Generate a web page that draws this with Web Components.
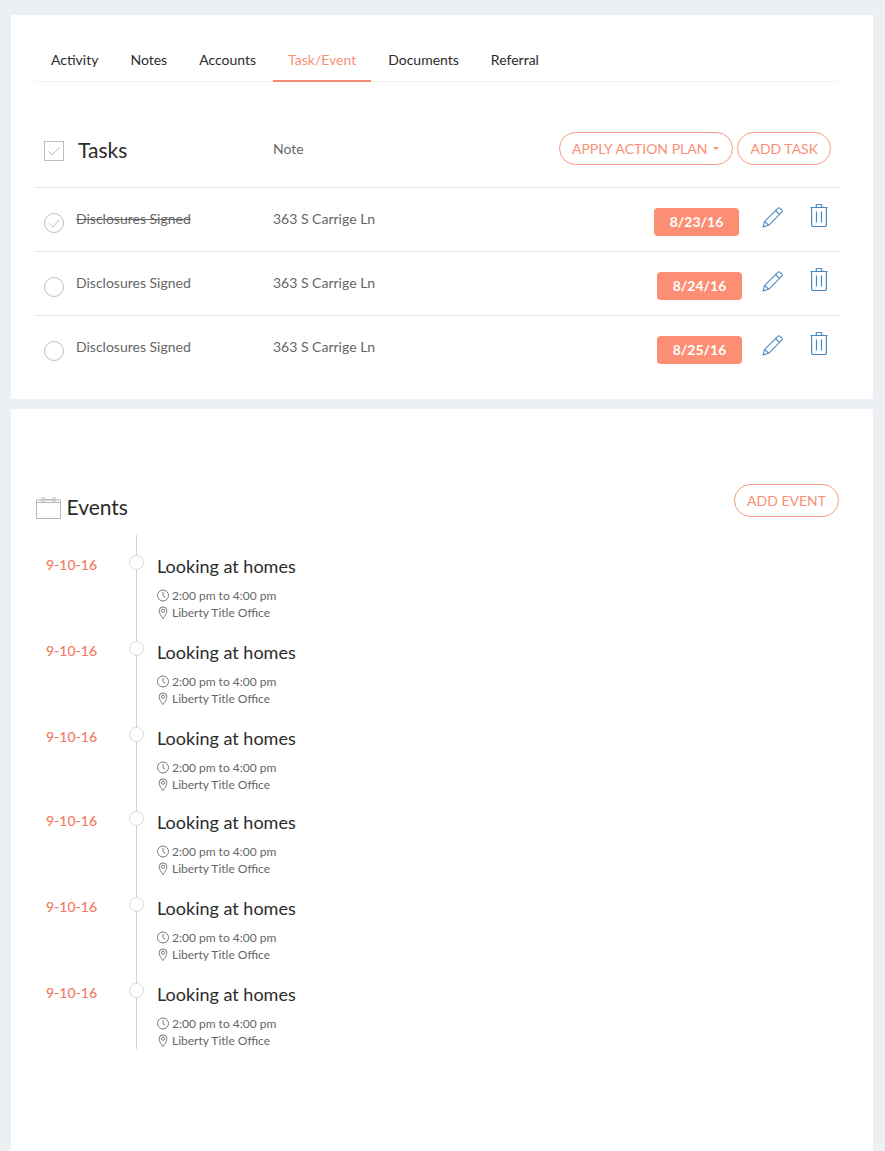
<!DOCTYPE html>
<html>
<head>
<meta charset="utf-8">
<title>Task/Event</title>
<style>
  html, body { margin: 0; height: 100%; }
  body {
    background: #ecf0f5;
    font-family: Lato, "Liberation Sans", sans-serif;
    color: #2b2b2b;
    overflow: hidden;
  }
</style>
</head>
<body>
<crm-page>
  <crm-card slot="tasks" style="--card-height: 384px">
    <tab-bar active="Task/Event" tabs="Activity,Notes,Accounts,Task/Event,Documents,Referral"></tab-bar>
    <tasks-header></tasks-header>
    <task-row name="Disclosures Signed" note="363 S Carrige Ln" date="8/23/16" done style="--badge-gap: 23px"></task-row>
    <task-row name="Disclosures Signed" note="363 S Carrige Ln" date="8/24/16"></task-row>
    <task-row name="Disclosures Signed" note="363 S Carrige Ln" date="8/25/16" last></task-row>
  </crm-card>
  <crm-card style="--card-height: 760px">
    <events-header></events-header>
    <event-list>
      <event-item></event-item>
      <event-item></event-item>
      <event-item style="--item-height: 84px"></event-item>
      <event-item></event-item>
      <event-item></event-item>
      <event-item></event-item>
    </event-list>
  </crm-card>
</crm-page>

<script>
class CrmPage extends HTMLElement {
    connectedCallback() {
        this.attachShadow({mode: 'open'});
        this.shadowRoot.innerHTML = `
<style>
:host { display: flex; flex-direction: column; gap: 10px; padding: 15px 12px 0 11px; }
</style>
<slot name="tasks"></slot><slot></slot>`;
    }
}

class CrmCard extends HTMLElement {
    connectedCallback() {
        this.attachShadow({mode: 'open'});
        this.shadowRoot.innerHTML = `
<style>
:host { display: block; background: #fff; height: var(--card-height); box-sizing: border-box; padding: 0 34px 0 24px; }
</style>
<slot></slot>`;
    }
}

class TabBar extends HTMLElement {
    connectedCallback() {
        this.attachShadow({mode: 'open'});
        const active = this.getAttribute('active');
        const tabs = this.getAttribute('tabs').split(',').map(t =>
            `<a class="${t === active ? 'on' : ''}">${t}</a>`).join('');
        this.shadowRoot.innerHTML = `
<style>
:host { display: flex; height: 67px; box-sizing: border-box; margin-right: 1px; border-bottom: 1px solid #f2f2f2; align-items: stretch; }
a { display: block; padding: 36px 16px 0; font-size: 14px; line-height: 18px; color: #2b2b2b; box-sizing: border-box; height: 67px; }
a.on { color: #fb8f75; border-bottom: 2px solid #f58d72; margin: 0 1px; padding: 36px 15px 0; }
</style>
${tabs}`;
    }
}

class PillButton extends HTMLElement {
    connectedCallback() {
        this.attachShadow({mode: 'open'});
        this.shadowRoot.innerHTML = `
<style>
:host { display: inline-flex; align-items: center; height: 33px; box-sizing: border-box; padding: 0 12px; border: 1px solid #f79a83; border-radius: 17px; color: #fb8f75; font-size: 14px; white-space: nowrap; }
.caret { width: 0; height: 0; margin: 0 1px 0 6px; border: 3.5px solid transparent; border-top: 3.5px solid #fb8f75; border-bottom: 0; }
</style>
<slot></slot>${this.hasAttribute('caret') ? '<span class="caret"></span>' : ''}`;
    }
}

class TasksHeader extends HTMLElement {
    connectedCallback() {
        this.attachShadow({mode: 'open'});
        this.shadowRoot.innerHTML = `
<style>
:host { display: flex; align-items: center; height: 106px; box-sizing: border-box; padding: 36px 8px 0 9px; border-bottom: 1px solid #e6e6e6; }
svg { width: 20px; height: 20px; flex: none; margin-top: -4px; }
h2 { margin: -6px 0 0 14px; width: 195px; font-size: 21px; font-weight: 400; line-height: 28px; color: #2b2b2b; }
.note { font-size: 14px; color: #666; flex: 1; margin-top: -9px; }
.btns { display: flex; gap: 4px; margin-top: -9px; }
</style>
<svg viewBox="0 0 20 20" fill="none" stroke="#bdbdbd"><rect x=".5" y=".5" width="19" height="19"/><path d="M4.5 10.5l3.6 3.4 7.4-7.4"/></svg>
<h2>Tasks</h2>
<div class="note">Note</div>
<div class="btns"><pill-button caret>APPLY ACTION PLAN</pill-button><pill-button>ADD TASK</pill-button></div>`;
    }
}

class TaskRow extends HTMLElement {
    connectedCallback() {
        this.attachShadow({mode: 'open'});
        const done = this.hasAttribute('done');
        const tick = done ? '<path d="M5.5 10.5l3.4 3.6 6.6-7.6"/>' : '';
        this.shadowRoot.innerHTML = `
<style>
:host { display: flex; align-items: center; height: 64px; box-sizing: border-box; padding: 0 11px 0 9px; border-bottom: 1px solid #e6e6e6; font-size: 14px; color: #666; }
:host([last]) { height: 63px; border-bottom: 0; }
svg { flex: none; }
.check { width: 20px; height: 20px; margin-top: 6px; }
.name { width: 197px; margin-left: 12px; margin-top: -2px; }
:host([done]) .name { text-decoration: line-through; }
.note { flex: 1; margin-top: -2px; }
.badge { width: 85px; height: 28px; line-height: 28px; margin: 5px var(--badge-gap, 20px) 0 0; text-align: center; background: #fc8f73; border-radius: 4px; color: #fff; font-size: 14px; font-weight: 700; }
.pencil { width: 21px; height: 21px; margin-top: -4px; }
.trash { width: 18px; height: 23px; margin: -8px 0 0 27px; }
</style>
<svg class="check" viewBox="0 0 20 20" fill="none" stroke="#bdbdbd"><circle cx="10" cy="10" r="9.5"/>${tick}</svg>
<div class="name">${this.getAttribute('name')}</div>
<div class="note">${this.getAttribute('note')}</div>
<div class="badge">${this.getAttribute('date')}</div>
<svg class="pencil" viewBox="0 0 21 21" fill="none" stroke="#4a88c4" stroke-width="1.1" stroke-linejoin="round"><path d="M15.8 1.3a1.6 1.6 0 0 1 2.3 0l1.6 1.6a1.6 1.6 0 0 1 0 2.3L6.6 18.3 1 20l1.7-5.6z"/><path d="M13.6 3.5l3.9 3.9M2.7 14.4l3.9 3.9"/></svg>
<svg class="trash" viewBox="0 0 18 23" fill="none" stroke="#4a88c4" stroke-width="1.2" stroke-linejoin="round"><path d="M.5 3.5h17M6.3 3.3V1.5c0-.6.4-1 1-1h3.4c.6 0 1 .4 1 1v1.8"/><path d="M1.6 3.5v17.8c0 .7.5 1.2 1.2 1.2h12.4c.7 0 1.2-.5 1.2-1.2V3.5"/><path d="M6.5 7.5v11M11.5 7.5v11"/></svg>`;
    }
}

class EventsHeader extends HTMLElement {
    connectedCallback() {
        this.attachShadow({mode: 'open'});
        this.shadowRoot.innerHTML = `
<style>
:host { display: flex; align-items: flex-start; height: 126px; box-sizing: border-box; padding: 75px 0 0 1px; }
svg { width: 25px; height: 22px; flex: none; margin-top: 13px; }
h2 { margin: 9px auto 0 5.5px; font-size: 21px; font-weight: 400; line-height: 28px; color: #2b2b2b; }
</style>
<svg viewBox="0 0 25 22" fill="none" stroke="#b5b5b5"><path d="M.5 3h24v18.5H.5zM.5 5.5h24"/><path d="M9 2.5h7"/><rect x="5.5" y=".7" width="3" height="3.5" rx="1"/><rect x="16.5" y=".7" width="3" height="3.5" rx="1"/></svg>
<h2>Events</h2>
<pill-button>ADD EVENT</pill-button>`;
    }
}

class EventList extends HTMLElement {
    connectedCallback() {
        this.attachShadow({mode: 'open'});
        this.shadowRoot.innerHTML = `
<style>
:host { display: block; }
</style>
<slot></slot>`;
    }
}

class EventItem extends HTMLElement {
    connectedCallback() {
        this.attachShadow({mode: 'open'});
        this.shadowRoot.innerHTML = `
<style>
:host { display: grid; grid-template-columns: 83px 15px 1fr; height: var(--item-height, 86px); padding-left: 11px; }
.date { padding-top: 20px; color: #f4775f; font-size: 14px; line-height: 20px; font-weight: 500; }
.rail { position: relative; background: linear-gradient(#d2d2d2, #d2d2d2) center / 1px 100% no-repeat; }
.dot { position: absolute; left: 0; top: 20px; width: 15px; height: 15px; box-sizing: border-box; border: 1px solid #d9d9d9; border-radius: 50%; background: #fff; }
.body { padding: 18px 0 0 13px; }
.title { font-size: 18px; line-height: 26px; color: #2b2b2b; }
.meta { display: flex; align-items: center; gap: 3px; font-size: 12px; line-height: 17px; color: #666; }
.meta svg { width: 12px; height: 13px; flex: none; }
.time { margin-top: 8px; }
</style>
<div class="date">9-10-16</div>
<div class="rail"><div class="dot"></div></div>
<div class="body">
  <div class="title">Looking at homes</div>
  <div class="meta time"><svg viewBox="0 0 12 13" fill="none" stroke="#777"><circle cx="6" cy="6.5" r="5.5"/><path d="M6 3v3.7l2.4 1.8"/></svg>2:00 pm to 4:00 pm</div>
  <div class="meta"><svg viewBox="0 0 12 13" fill="none" stroke="#777"><path d="M6 12.5C4 9.8 2.2 7.5 2.2 4.7a3.8 3.8 0 0 1 7.6 0C9.8 7.5 8 9.8 6 12.5z"/><circle cx="6" cy="4.7" r="1.6"/></svg>Liberty Title Office</div>
</div>`;
    }
}

customElements.define('crm-page', CrmPage);
customElements.define('crm-card', CrmCard);
customElements.define('tab-bar', TabBar);
customElements.define('pill-button', PillButton);
customElements.define('tasks-header', TasksHeader);
customElements.define('task-row', TaskRow);
customElements.define('events-header', EventsHeader);
customElements.define('event-list', EventList);
customElements.define('event-item', EventItem);
</script>
</body>
</html>
